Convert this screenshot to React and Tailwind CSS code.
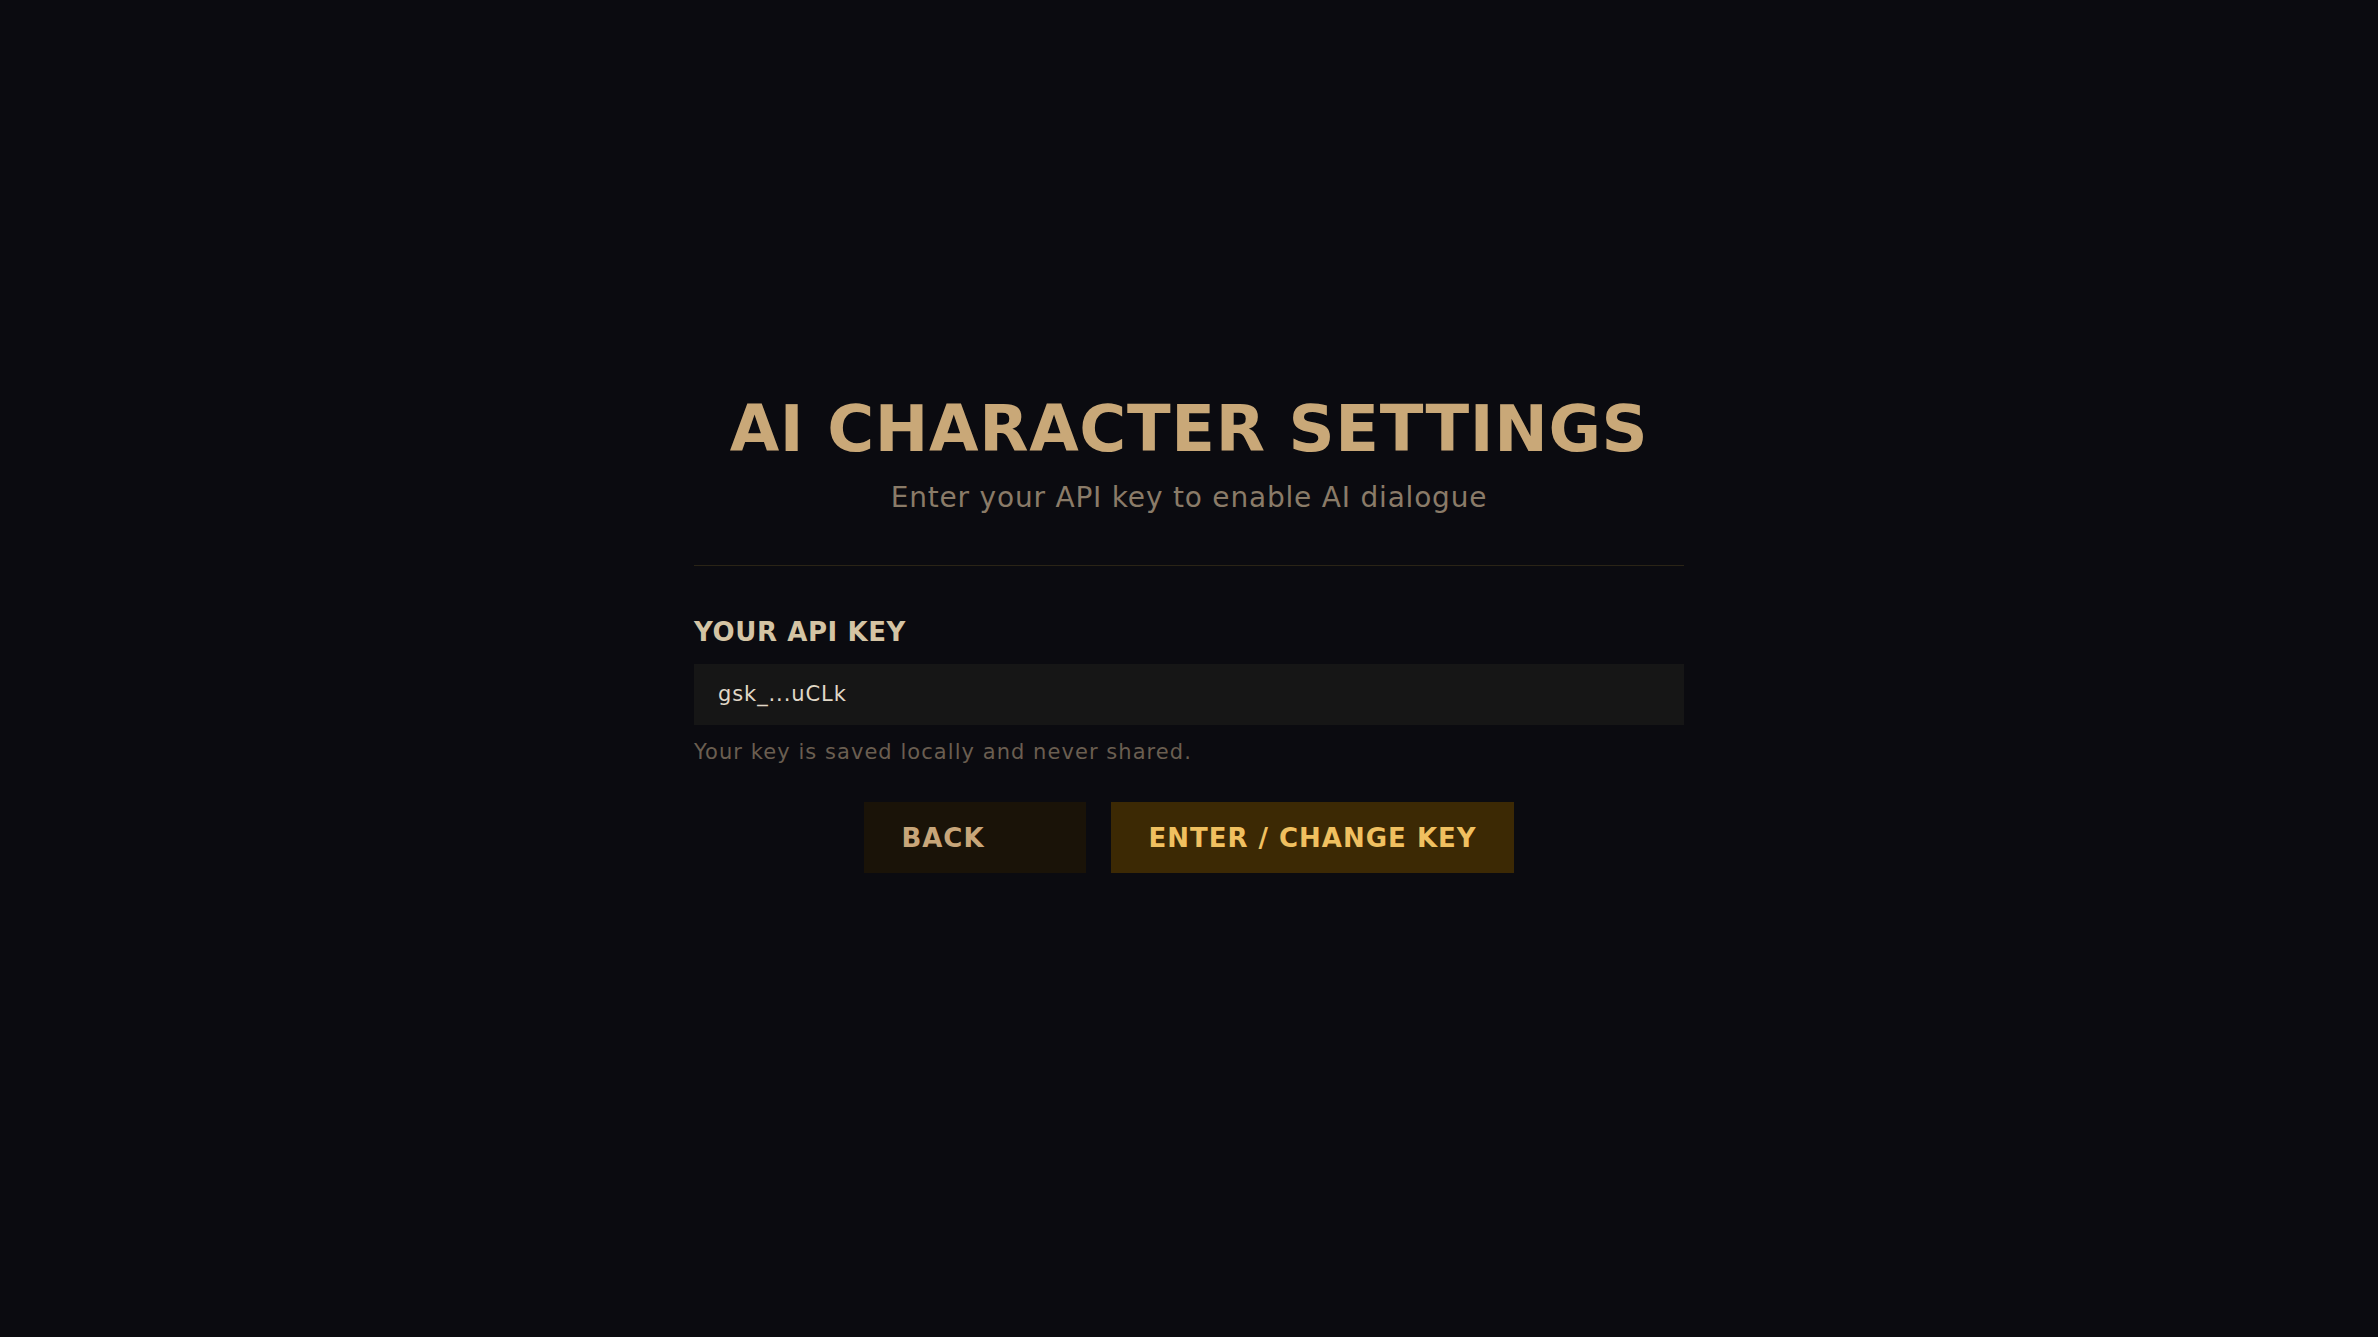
export default function App() {
  return (
    <div className="min-h-screen w-full bg-[#0b0b10] font-['DejaVu_Sans',sans-serif]">
      <div className="mx-auto flex w-[990px] flex-col pt-[397px]">
        <h1 className="text-center text-[64px] leading-[64px] font-bold tracking-[0.65px] text-[#c9a878]">
          AI CHARACTER SETTINGS
        </h1>
        <p className="mt-[23px] text-center text-[28px] leading-[28px] tracking-[0.8px] text-[#8a7b68]">
          Enter your API key to enable AI dialogue
        </p>
        <div className="mt-[53px] h-px w-full bg-[#2a2416]" />
        <label className="mt-[53px] text-[26px] leading-[26px] font-bold tracking-[0.6px] text-[#d4c4a4]">
          YOUR API KEY
        </label>
        <div className="mt-[19px] flex h-[61px] w-full items-center bg-[#161616] px-6">
          <span className="text-[21px] leading-[21px] tracking-[0.9px] text-[#e0d8c8]">gsk_...uCLk</span>
        </div>
        <p className="mt-[17px] text-[21px] leading-[21px] tracking-[1.05px] text-[#6a5e50]">
          Your key is saved locally and never shared.
        </p>
        <div className="mt-[39px] flex justify-center gap-[25px]">
          <button className="flex h-[71px] w-[222px] items-center bg-[#1a1308] pl-[37px] text-[26px] leading-[26px] font-bold tracking-[1px] text-[#c8a67a]">
            BACK
          </button>
          <button className="flex h-[71px] items-center bg-[#3c2904] px-[37px] text-[26px] leading-[26px] font-bold tracking-[1px] text-[#f0c060]">
            ENTER / CHANGE KEY
          </button>
        </div>
      </div>
    </div>
  );
}
